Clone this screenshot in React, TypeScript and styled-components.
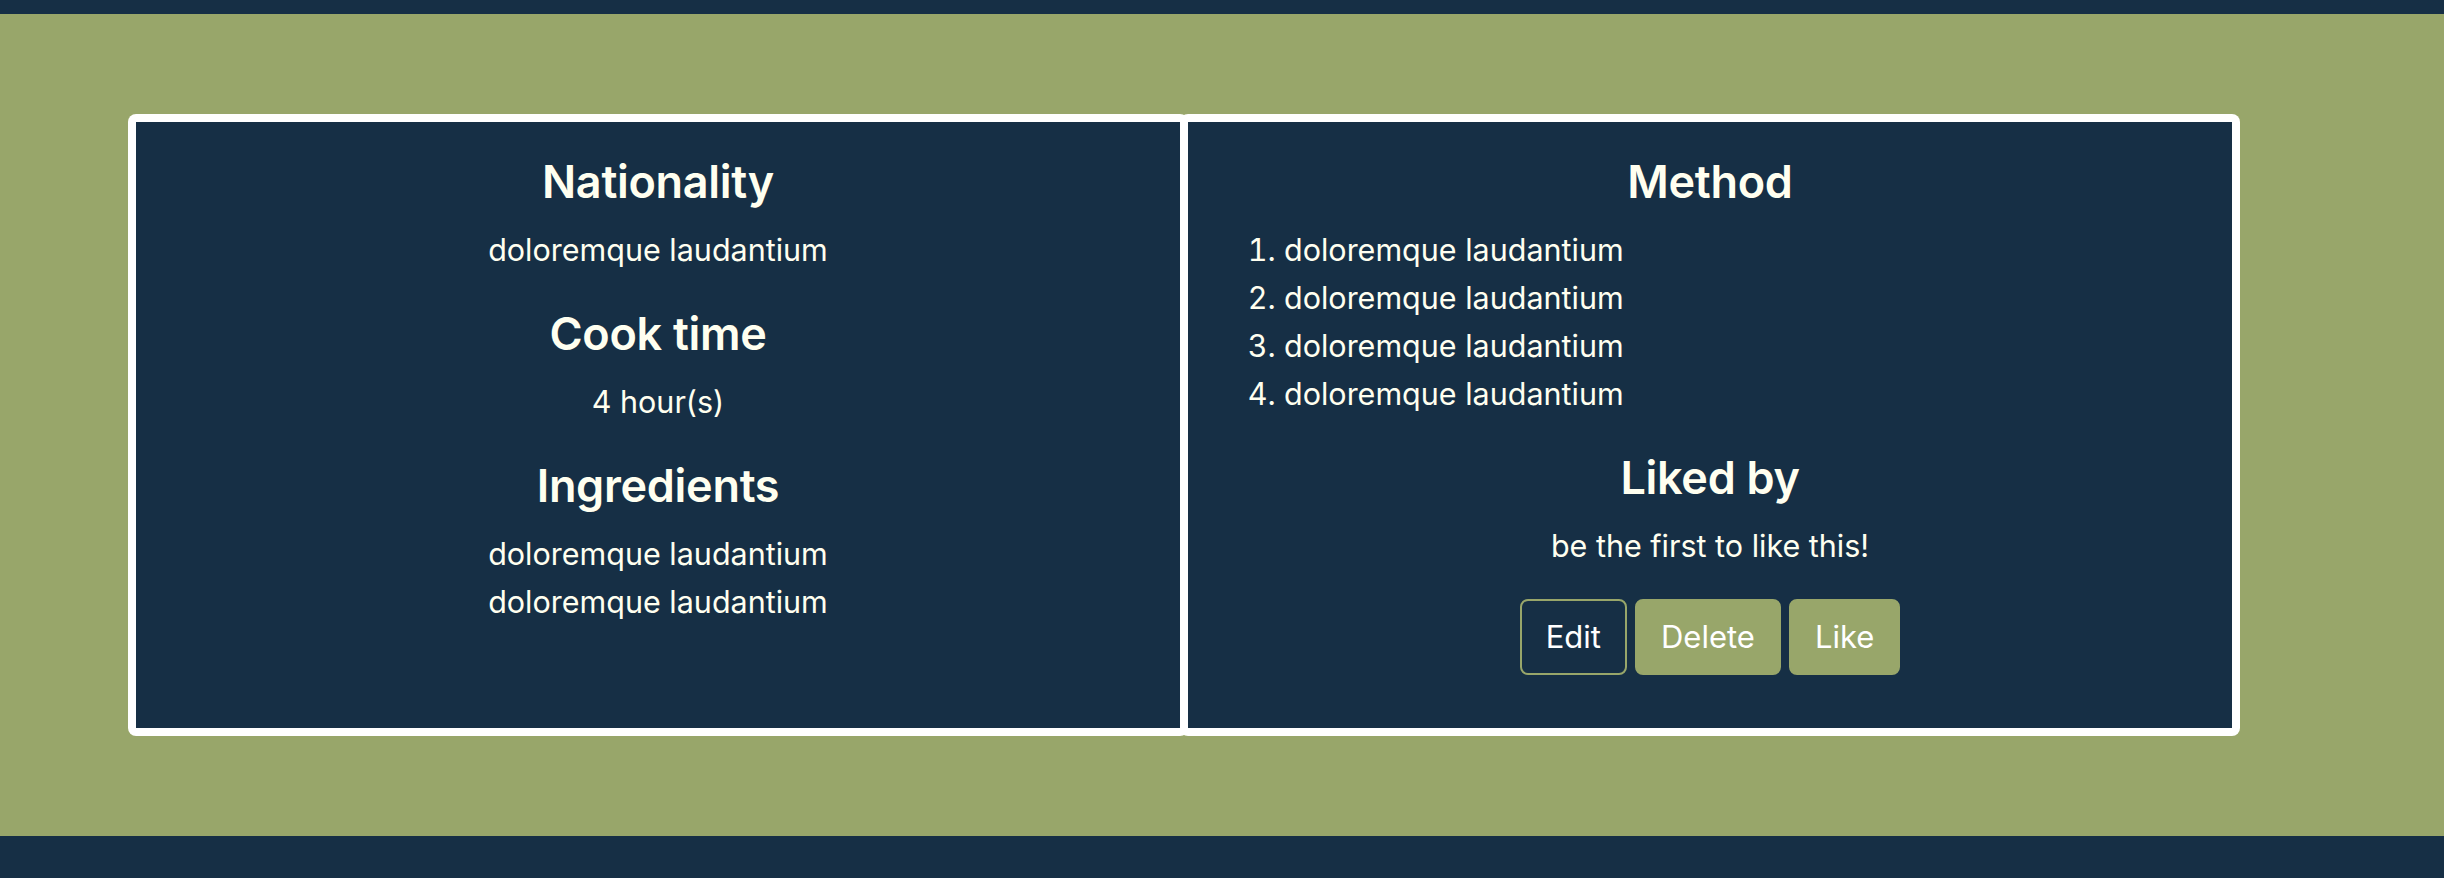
import React from "react";
import styled, { createGlobalStyle } from "styled-components";

const GlobalStyle = createGlobalStyle`
  html, body {
    margin: 0;
    padding: 0;
    background: #162f45;
  }
  body {
    font-family: Inter, "Noto Sans", "Liberation Sans", sans-serif;
    font-size: 30.5px;
    line-height: 48px;
    color: #fffff0;
  }
  * { box-sizing: border-box; }
`;

const TopBar = styled.header`
  height: 14px;
  background: #162f45;
`;

const Main = styled.main`
  background: #98a66a;
  padding: 104px 208px 104px 132px;
`;

const CardRow = styled.div`
  display: flex;
  align-items: stretch;
`;

const Card = styled.section<{ $align?: "center" | "left" }>`
  flex: 1 1 0;
  min-width: 0;
  background: #162f45;
  border: 4px solid #ffffff;
  border-radius: 4px;
  box-shadow: 0 0 0 4px #ffffff;
  padding: 32px;
  text-align: ${(p) => (p.$align === "left" ? "left" : "center")};
`;

const Heading = styled.h4`
  margin: 0 0 16px;
  font-size: 45px;
  font-weight: 600;
  letter-spacing: -0.3px;
  line-height: 56px;
  text-align: center;
`;

const Text = styled.p<{ $gap?: number; $center?: boolean }>`
  margin: 0 0 ${(p) => (p.$gap ?? 32)}px;
  text-align: ${(p) => (p.$center ? "center" : "inherit")};
`;

const Block = styled.div`
  margin-bottom: 32px;
`;

const Steps = styled.ol`
  margin: 0 0 32px;
  padding-left: 64px;
  text-align: left;
`;

const Step = styled.li``;

const ButtonRow = styled.div`
  display: flex;
  justify-content: center;
  gap: 8px;
  margin-bottom: 21px;
`;

const Button = styled.button<{ $variant: "outline" | "solid" }>`
  font-family: inherit;
  font-size: 31px;
  line-height: 48px;
  font-weight: 400;
  color: #ffffff;
  padding: 12px 24px;
  border-radius: 8px;
  border: 2px solid #98a66a;
  background: ${(p) => (p.$variant === "solid" ? "#98a66a" : "transparent")};
  cursor: pointer;
`;

const Footer = styled.footer`
  height: 42px;
  background: #162f45;
`;

export default function App() {
  return (
    <>
      <GlobalStyle />
      <TopBar />
      <Main>
        <CardRow>
          <Card>
            <Heading>Nationality</Heading>
            <Text>doloremque laudantium</Text>
            <Heading>Cook time</Heading>
            <Text>4 hour(s)</Text>
            <Heading>Ingredients</Heading>
            <Block>
              <Text $gap={0}>doloremque laudantium</Text>
              <Text $gap={0}>doloremque laudantium</Text>
            </Block>
          </Card>
          <Card $align="left">
            <Heading>Method</Heading>
            <Steps>
              <Step>doloremque laudantium</Step>
              <Step>doloremque laudantium</Step>
              <Step>doloremque laudantium</Step>
              <Step>doloremque laudantium</Step>
            </Steps>
            <Heading>Liked by</Heading>
            <Text $center $gap={29}>be the first to like this!</Text>
            <ButtonRow>
              <Button $variant="outline">Edit</Button>
              <Button $variant="solid">Delete</Button>
              <Button $variant="solid">Like</Button>
            </ButtonRow>
          </Card>
        </CardRow>
      </Main>
      <Footer />
    </>
  );
}
